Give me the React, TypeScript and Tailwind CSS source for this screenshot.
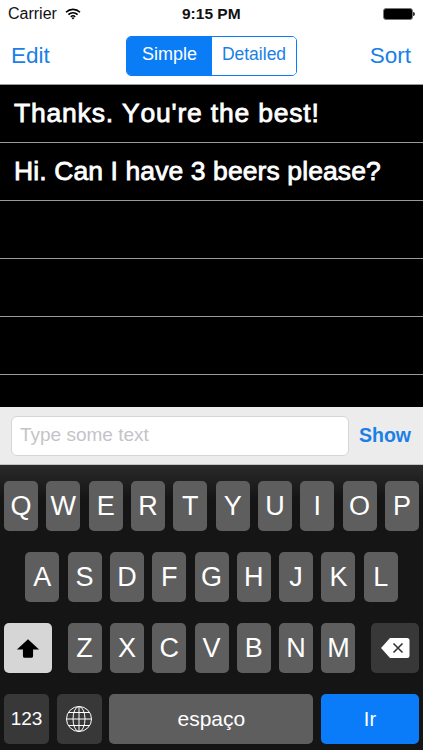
const ROW_ONE = ['Q', 'W', 'E', 'R', 'T', 'Y', 'U', 'I', 'O', 'P'];
const ROW_TWO = ['A', 'S', 'D', 'F', 'G', 'H', 'J', 'K', 'L'];
const ROW_THREE = ['Z', 'X', 'C', 'V', 'B', 'N', 'M'];
const MESSAGES = [
  { text: "Thanks. You're the best!", spacing: 'tracking-[0.8px]' },
  { text: 'Hi. Can I have 3 beers please?', spacing: 'tracking-[0.1px]' },
  { text: '', spacing: '' },
  { text: '', spacing: '' },
  { text: '', spacing: '' },
  { text: '', spacing: '' },
];

function Key({ label }: { label: string }): React.ReactElement {
  return (
    <div className="flex h-[50px] w-[34px] items-center justify-center rounded-[5px] bg-[#5e5e5e] text-[27px] text-white">
      {label}
    </div>
  );
}

function StatusBar(): React.ReactElement {
  return (
    <div className="relative flex h-[28px] items-center justify-between pl-[8px] pr-[8px] text-[16px] text-[#111]">
      <div className="flex items-center gap-[8px]">
        <span>Carrier</span>
        <svg width="16" height="12" viewBox="0 0 16 12" fill="none" stroke="#000" strokeWidth="1.6">
          <path d="M1 4.2a10 10 0 0 1 14 0" />
          <path d="M3.4 6.6a6.6 6.6 0 0 1 9.2 0" />
          <path d="M5.8 8.8a3.2 3.2 0 0 1 4.4 0" />
          <path d="M8 11.4l-1.4-1.5a2 2 0 0 1 2.8 0z" fill="#000" stroke="none" />
        </svg>
      </div>
      <span className="absolute left-[182px] text-[15.5px] font-bold">9:15 PM</span>
      <div className="flex items-center">
        <div className="h-[12px] w-[30px] rounded-[3px] border border-[#777] bg-black" />
        <div className="h-[4px] w-[2px] rounded-r-sm bg-[#333]" />
      </div>
    </div>
  );
}

function NavBar(): React.ReactElement {
  return (
    <div className="flex h-[57px] items-center border-b border-[#9a9a9a] pb-[1px] pl-[11px] pr-[12px] text-[22.5px] text-[#1a7fe8]">
      <span className="w-[115px]">Edit</span>
      <div className="flex h-[40px] w-[171px] overflow-hidden rounded-[5px] border border-[#0a7cf5]">
        <div className="flex w-[85px] items-center justify-center bg-[#0a7cf5] pb-[3px] text-[18px] text-white">Simple</div>
        <div className="flex flex-1 items-center justify-center bg-white pb-[3px] text-[17.5px]">Detailed</div>
      </div>
      <span className="ml-auto">Sort</span>
    </div>
  );
}

function MessageList(): React.ReactElement {
  return (
    <div className="h-[322px] overflow-hidden bg-black">
      {MESSAGES.map((message, index) => (
        <div key={index} className={`flex h-[58px] items-center border-b border-[#9a9a9a] pl-[14px] pt-[1px] text-[26.5px] text-white [-webkit-text-stroke:0.8px_white] [font-kerning:none] ${message.spacing}`}>
          {message.text}
        </div>
      ))}
    </div>
  );
}

function InputBar(): React.ReactElement {
  return (
    <div className="flex h-[58px] items-center border-b border-[#c4c4c4] bg-[#ececec] pl-[11px] pr-[12px]">
      <div className="flex h-[40px] w-[338px] items-center rounded-[6px] border border-[#d6d6d6] bg-white pl-[8px] text-[19px] text-[#c4c4c8]">
        Type some text
      </div>
      <span className="ml-auto text-[19.5px] font-bold text-[#1a7fe8]">Show</span>
    </div>
  );
}

function Keyboard(): React.ReactElement {
  return (
    <div className="flex flex-1 flex-col bg-gradient-to-b from-[#2a2a2a] to-[#151515] to-[12%] pt-[16px]">
      <div className="flex justify-between px-[4px]">
        {ROW_ONE.map((key) => <Key key={key} label={key} />)}
      </div>
      <div className="mt-[21px] flex justify-center gap-[8.3px]">
        {ROW_TWO.map((key) => <Key key={key} label={key} />)}
      </div>
      <div className="mt-[21px] flex items-stretch justify-between px-[4px]">
        <div className="flex h-[50px] w-[48px] items-center justify-center rounded-[5px] bg-[#d6d6d6]">
          <svg width="24" height="21" viewBox="0 0 26 22" fill="#000">
            <path d="M13 1 25 12h-6.500v7a2 2 0 0 1-2 2h-7a2 2 0 0 1-2-2v-7H1z" />
          </svg>
        </div>
        <div className="flex gap-[8.300px]">
          {ROW_THREE.map((key) => <Key key={key} label={key} />)}
        </div>
        <div className="flex h-[50px] w-[48px] items-center justify-center rounded-[5px] bg-[#383838]">
          <svg width="30" height="22" viewBox="0 0 30 22">
            <path d="M10 1h17a2.500 2.500 0 0 1 2.500 2.500v15A2.500 2.500 0 0 1 27 21H10L1 11z" fill="#fff" />
            <path d="M13.500 6.500l9 9M22.500 6.500l-9 9" stroke="#333" strokeWidth="1.600" fill="none" />
          </svg>
        </div>
      </div>
      <div className="mt-[21px] flex justify-between px-[4px]">
        <div className="flex h-[50px] w-[45px] items-center justify-center rounded-[5px] bg-[#383838] text-[19px] text-white">123</div>
        <div className="flex h-[50px] w-[45px] items-center justify-center rounded-[5px] bg-[#383838]">
          <svg width="28" height="28" viewBox="0 0 28 28" fill="none" stroke="#fff" strokeWidth="1">
            <circle cx="14" cy="14" r="12.500" />
            <ellipse cx="14" cy="14" rx="6" ry="12.500" />
            <path d="M14 1.500v25M1.500 14h25M3.500 7.500h21M3.500 20.500h21" />
          </svg>
        </div>
        <div className="flex h-[50px] w-[204px] items-center justify-center rounded-[5px] bg-[#5e5e5e] text-[21px] text-white">espaço</div>
        <div className="flex h-[50px] w-[98px] items-center justify-center rounded-[5px] bg-[#0a7cfa] text-[20px] text-white">Ir</div>
      </div>
    </div>
  );
}

function App(): React.ReactElement {
  return (
    <div className="flex h-[750px] w-[423px] flex-col overflow-hidden bg-white font-['Liberation_Sans',sans-serif]">
      <StatusBar />
      <NavBar />
      <MessageList />
      <InputBar />
      <Keyboard />
    </div>
  );
}

export default App;
